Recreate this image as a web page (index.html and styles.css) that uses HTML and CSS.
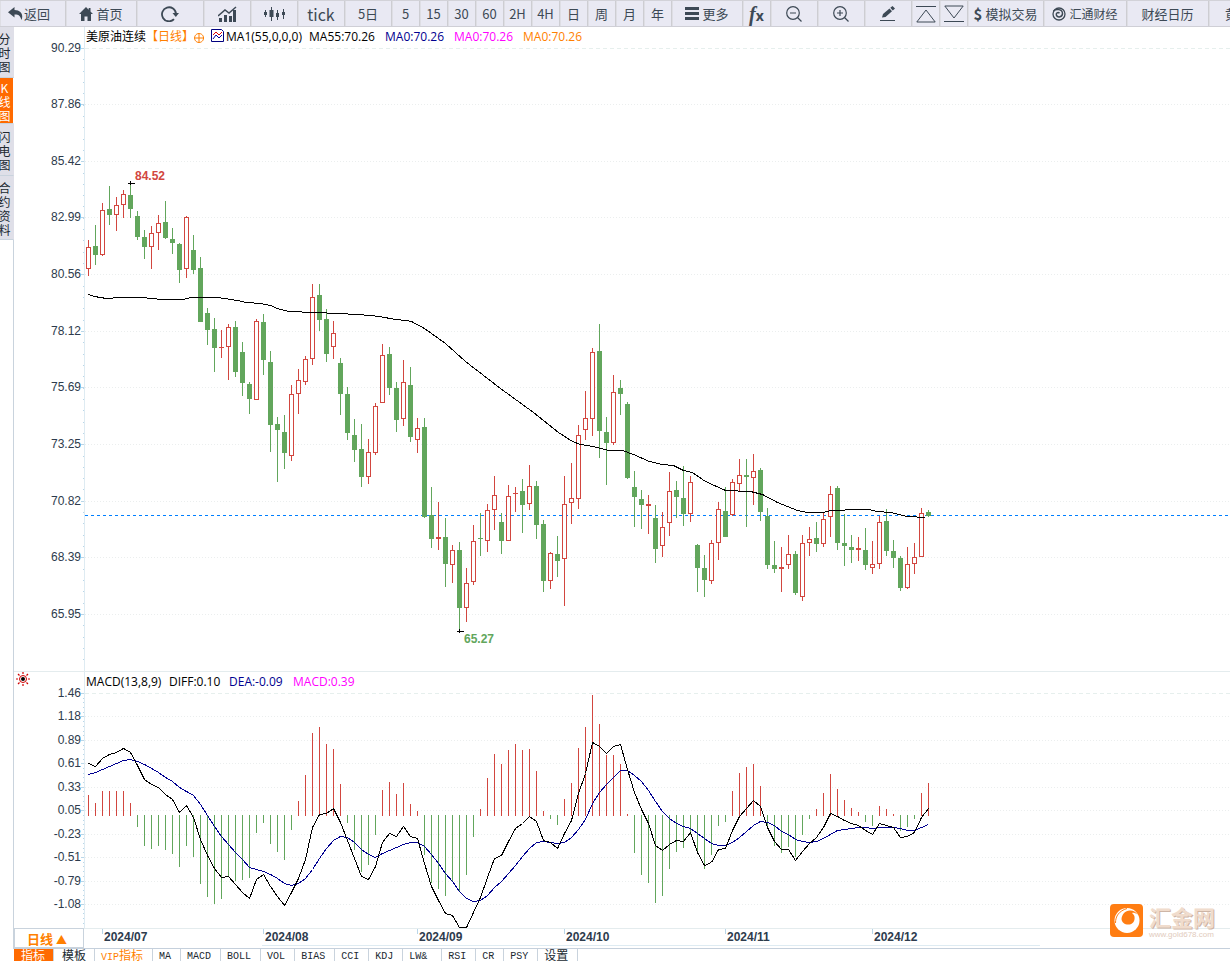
FILE: index.html
```html
<!DOCTYPE html>
<html lang="zh-CN">
<head>
<meta charset="utf-8">
<title>美原油连续 日线</title>
<link rel="stylesheet" href="styles.css">
</head>
<body>
<header class="toolbar">
  <button class="tool back"><svg class="icon" width="15" height="13" viewBox="0 0 15 13"><path fill="currentColor" d="M6.500 0 0 5.200 6.500 10.400V7.500C10 7.300 12 8.200 13.500 13 15.500 8 13.500 3.300 6.500 3z"/></svg>返回</button>
  <button class="tool w71 gap3"><svg class="icon" width="14" height="14" viewBox="0 0 14 14"><path fill="currentColor" d="M7 0 0 7h2v7h3.500V9.500h3V14H12V7h2l-2.500-2.500V1h-1.800v1.700z"/></svg>首页</button>
  <button class="tool w67" aria-label="刷新"><svg class="icon" width="18" height="16" viewBox="0 0 18 16"><path fill="none" stroke="currentColor" stroke-width="1.800" d="M13 13.200A7 7 0 1 1 15 8"/><path fill="currentColor" d="M11.500 7H18l-3.200 4z"/></svg></button>
  <button class="tool w47" aria-label="指标图"><svg class="icon" width="19" height="16" viewBox="0 0 19 16"><path fill="currentColor" d="M1 12h3v4H1zm5-3h3v7H6zm5 1h3v6h-3zm4-6h3v12h-3z"/><path fill="none" stroke="currentColor" stroke-width="1.500" d="M0 10l7-6 4 3 7-6"/></svg></button>
  <button class="tool w47" aria-label="K线图"><svg class="icon" width="21" height="14" viewBox="0 0 21 14"><path stroke="currentColor" d="M1.500 3v7M7.500 0v14M13.500 3v10M19.500 2v10"/><path fill="currentColor" d="M0 5h3v3H0zm5.500-2h4v7h-4zM12 6h3v4h-3zm6-1h3v3h-3z"/></svg></button>
  <button class="tool w47 large">tick</button>
  <button class="tool w47">5日</button>
  <button class="tool w28">5</button>
  <button class="tool w28">15</button>
  <button class="tool w28">30</button>
  <button class="tool w28">60</button>
  <button class="tool w28">2H</button>
  <button class="tool w28">4H</button>
  <button class="tool w28">日</button>
  <button class="tool w28">周</button>
  <button class="tool w28">月</button>
  <button class="tool w28">年</button>
  <button class="tool w71 gap3"><svg class="icon" width="14" height="13" viewBox="0 0 14 13"><path fill="currentColor" d="M0 0h14v3H0zm0 5h14v3H0zm0 5h14v3H0z"/></svg>更多</button>
  <button class="tool w28 fx"><i>f</i><b>x</b></button>
  <button class="tool w47" aria-label="缩小"><svg class="icon" width="16" height="16" viewBox="0 0 16 16"><g fill="none" stroke="currentColor" stroke-width="1.200"><circle cx="7" cy="7" r="6.300"/><path d="M4 7h6M11.500 11.500l4 4"/></g></svg></button>
  <button class="tool w47" aria-label="放大"><svg class="icon" width="16" height="16" viewBox="0 0 16 16"><g fill="none" stroke="currentColor" stroke-width="1.200"><circle cx="7" cy="7" r="6.300"/><path d="M4 7h6M7 4v6M11.500 11.500l4 4"/></g></svg></button>
  <button class="tool w47" aria-label="画线"><svg class="icon" width="16" height="15" viewBox="0 0 16 15"><path fill="currentColor" d="M0 14h15v1H0zM2 11.500 3 8 9.500 2.500l2.500 2.800L5.500 11zM10.300 1.800 12.500 0 15 2.500l-2.200 2z"/></svg></button>
  <button class="tool w28" aria-label="上移"><svg class="icon" width="20" height="18" viewBox="0 0 20 18"><path fill="none" stroke="currentColor" d="M0 1.500h20M10 5 .8 17h18.400z"/></svg></button>
  <button class="tool w28" aria-label="下移"><svg class="icon" width="20" height="18" viewBox="0 0 20 18"><path fill="none" stroke="currentColor" d="M0 16.500h20M10 13 .8 1h18.400z"/></svg></button>
  <button class="tool w76 gap3"><b class="dollar">$</b>模拟交易</button>
  <button class="tool w83 gap3 small"><svg class="icon" width="14" height="14" viewBox="0 0 14 14"><g fill="none" stroke="currentColor"><circle cx="7" cy="7" r="6" stroke-width="1.300"/><path stroke-width="1.500" d="M1.500 4C4 1.500 10.500 2 10.500 6.500c0 3.500-4.500 4.500-6 2C3.500 6 6 4.500 7.500 6.200"/></g></svg>汇通财经</button>
  <button class="tool w82">财经日历</button>
  <button class="tool w82 last">黄金</button>
</header>

<main class="workspace">
  <nav class="side">
    <button class="side-tab h51">分时图</button>
    <button class="side-tab h46 on">K线图</button>
    <button class="side-tab h52">闪电图</button>
    <button class="side-tab h64">合约资料</button>
    <div class="side-rest"></div>
  </nav>
  <div class="charts">
    <section class="panel">
      <div class="legend">
        <span>美原油连续</span><span class="orange">【日线】</span>
        <svg class="plus" width="10" height="10" viewBox="0 0 10 10"><path fill="none" stroke="#ff7f00" d="M5 .5a4.500 4.500 0 1 0 .1 0M5 .5v9M.5 5h9"/></svg>
        <svg class="trend" width="13" height="13" viewBox="0 0 13 13"><path fill="#fff" stroke="#000080" d="M.5.5h10l2 2v10H.5z"/><path fill="none" stroke="#e00000" d="M2 6l3-3 3 3 3-3"/><path fill="none" stroke="#0000a0" d="M2 10l3-4 3 3 3-3"/></svg>
        <span class="item ma1">MA1(55,0,0,0)</span><span class="item ma55">MA55:70.26</span><span class="item ma navy">MA0:70.26</span><span class="item ma magenta">MA0:70.26</span><span class="item orange">MA0:70.26</span>
      </div>
      <svg class="plot price" id="price"></svg>
    </section>
    <section class="panel lower">
      <svg class="sun" width="14" height="14" viewBox="0 0 14 14"><circle cx="7" cy="7" r="3.500" fill="#fff" stroke="#d00000"/><circle cx="7" cy="7" r="2" fill="#000"/><path stroke="#d00000" stroke-width="1.200" d="M7 0v2M7 12v2M0 7h2M12 7h2M2 2l1.500 1.500M10.500 10.500 12 12M12 2l-1.500 1.500M3.500 10.500 2 12"/></svg>
      <div class="legend">
        <span class="item ma1">MACD(13,8,9)</span><span class="item diff">DIFF:0.10</span><span class="item dea navy">DEA:-0.09</span><span class="item magenta">MACD:0.39</span>
      </div>
      <svg class="plot macd" id="macd"></svg>
    </section>
    <div class="timeline">
      <button class="period">日线 <span class="up">▲</span></button>
      <svg class="dates" id="dates"></svg>
    </div>
    <div class="brand">
      <svg width="33" height="33" viewBox="0 0 33 33"><rect width="33" height="33" rx="4" fill="#ff7d12"/><circle cx="17" cy="16.500" r="12.500" fill="#fff"/><path fill="#ff7d12" d="M11.500 15C12 10 15 7 20 6.500c3-.2 5.500 1 7.500 4-2-1.500-4-2-5.500-1.500 2 1.500 2.800 3 2.600 5.500-.3 4-3 6-6.300 6-3.800 0-6.500-2-6.800-5.500z"/><path fill="none" stroke="#ff7d12" d="M5.500 19C5.500 12 9 7 17 4.500"/></svg>
      <div class="brand-text"><strong>汇金网</strong><small>www.gold678.com</small></div>
    </div>
  </div>
</main>

<nav class="tabs">
  <button class="tab on"><span class="cjk">指标</span></button>
  <button class="tab wide"><span class="cjk">模板</span></button>
  <button class="tab vip">VIP<span class="cjk">指标</span></button>
  <button class="tab">MA</button>
  <button class="tab">MACD</button>
  <button class="tab">BOLL</button>
  <button class="tab">VOL</button>
  <button class="tab">BIAS</button>
  <button class="tab">CCI</button>
  <button class="tab">KDJ</button>
  <button class="tab lwr">LW&amp;</button>
  <button class="tab">RSI</button>
  <button class="tab">CR</button>
  <button class="tab">PSY</button>
  <button class="tab"><span class="cjk">设置</span></button>
</nav>
<script src="chart.js"></script>
</body>
</html>
```

FILE: styles.css
```css
* { box-sizing: border-box; }
body {
  margin: 0;
  height: 100vh;
  overflow: hidden;
  display: flex;
  flex-direction: column;
  background: #fff;
  color: #000;
  font: 12px/20px "Open Sans", "Noto Sans CJK SC", sans-serif;
}
button { margin: 0; border: 0; padding: 0; background: none; color: inherit; font: inherit; white-space: nowrap; flex: none; }
svg { display: block; flex: none; }

/* top toolbar */
.toolbar { display: flex; flex: none; height: 27px; overflow: hidden; background: #e9e9f3; border-top: 1px solid #d2d2d8; border-bottom: 1px solid #cfcfd6; }
.tool {
  display: flex; align-items: center; justify-content: center;
  border-right: 1px solid #cdcdd2; box-shadow: inset 1px 0 #dedee4;
  color: #3d4955; font: 13px/24px "Noto Sans CJK SC", sans-serif;
}
.back { width: 66px; justify-content: flex-start; padding-left: 8px; gap: 1px; }
.w28 { width: 28px; } .w47 { width: 47px; } .w67 { width: 67px; } .w71 { width: 71px; }
.w76 { width: 76px; } .w82 { width: 82px; } .w83 { width: 83px; }
.gap3 { gap: 3px; }
.large { font-size: 16px; }
.small { font-size: 12px; }
.dollar { font-size: 15px; }
.last { justify-content: flex-start; padding-left: 16px; }
.fx i { font: italic bold 20px/20px "Liberation Serif", serif; }
.fx b { font: bold 14px/20px "Open Sans", sans-serif; padding-top: 5px; }

/* left tabs */
.workspace { display: flex; flex: none; }
.side { display: flex; flex-direction: column; width: 14px; flex: none; overflow: hidden; }
.side-tab {
  width: 14px; padding: 4px 5px 0 0; display: flex; align-items: center; justify-content: center;
  writing-mode: vertical-rl; text-orientation: upright; overflow: hidden;
  background: #dfdfe8; color: #202830; border-bottom: 1px solid #c9d3dd; border-right: 1px solid #dfdfe8;
  font: 12px/12px "Noto Sans CJK SC", sans-serif; letter-spacing: 2px;
}
.side-tab.on { background: #ff6a00; color: #fff; border-right-color: #fff; }
.h51 { height: 51px; } .h46 { height: 46px; } .h52 { height: 52px; } .h64 { height: 64px; }
.side-rest { flex: 1; border-right: 1px solid #c9d3dd; }

/* chart panels */
.charts { flex: 1; min-width: 0; position: relative; }
.panel { position: relative; }
.lower { border-top: 1px solid #e4ecee; }
.legend { display: flex; align-items: center; height: 20px; margin-left: 70px; border-left: 1px solid #deebf2; padding-left: 1px; white-space: nowrap; }
.item { flex: none; }
.plus { margin-top: 2px; }
.trend { margin: 0 2px 4px 7px; }
.ma1 { width: 83px; } .ma55 { width: 76px; } .ma { width: 69px; }
.diff { width: 60px; } .dea { width: 64px; }
.orange { color: #ff7f00; } .navy { color: #000090; } .magenta { color: #f0f; }
.sun { position: absolute; left: 2px; top: 0; }
.plot { width: 100%; overflow: visible; }
.price { height: 624px; }
.macd { height: 236px; }
.plot line, .plot rect, .plot path, .dates line { shape-rendering: crispEdges; }
.scale { font: 12px "Liberation Sans", Arial, sans-serif; fill: #2d3b4d; text-anchor: end; }
.mark { font: bold 12px "Liberation Sans", Arial, sans-serif; }
.month { font: bold 12px "Liberation Sans", Arial, sans-serif; fill: #2d3b4d; }
.grid { stroke: #ebeeee; stroke-dasharray: 1 2; }
.grid.top { stroke: #e6efed; stroke-dasharray: 4 3; }
.axis { stroke: #deebf2; }
.tick { stroke: #b9d6e8; }
.last-price { stroke: #007fff; stroke-dasharray: 3 3; }
.line { fill: none; stroke: #000; }
.line.dea-line { stroke: #000090; }

.timeline { display: flex; height: 21px; border-bottom: 1px solid #c5d0dc; }
.period { width: 70px; height: 20px; padding-right: 4px; border: 1px solid #c9d3dd; color: #ff7f00; font: bold 13px/20px "Noto Sans CJK SC", sans-serif; }
.up { font-size: 11px; }
.dates { flex: 1; height: 20px; min-width: 0; border-top: 1px solid #e4ecee; }

.brand { position: absolute; right: 15px; bottom: 10px; display: flex; gap: 6px; }
.brand-text { display: flex; flex-direction: column; color: #f0dccd; }
.brand-text strong { font: bold 22px/24px "Noto Sans CJK SC", sans-serif; text-shadow: 1px 1px #cdb5a6; }
.brand-text small { color: #e2cbbc; font: 8px/9px "Liberation Sans", Arial, sans-serif; padding-top: 2px; }

/* indicator tabs */
.tabs { display: flex; flex: none; height: 16px; padding-left: 14px; overflow: hidden; }
.tab { padding: 0 9px 0 6px; border-right: 1px solid #c9d3dd; color: #202830; font: 10px/16px "Liberation Mono", "Noto Sans CJK SC", monospace; }
.tab.on { background: #ff6a00; color: #fff; padding: 0 8px 0 7px; }
.tab.wide { padding: 0 8px; }
.tab.vip { color: #ff7f00; }
.tab.lwr { padding-right: 14px; }
.cjk { font-size: 12px; }
```

FILE: chart.js
```js
// Every candle: kind (1 up, 0 down), high, body top, body bottom, low.
const candles = [
[1,240,247,269,276],[0,225,246,255,265],[1,203,210,255,256],[0,186,209,215,225],[1,197,205,215,231],[1,190,194,205,218],[0,183,195,209,218],[0,211,216,237,240],
[0,230,237,247,259],[1,226,233,247,269],[1,215,223,233,250],[0,201,222,238,239],[0,228,239,243,254],[0,243,244,270,283],[1,216,217,269,278],[0,235,250,270,274],
[0,257,268,322,322],[0,308,313,330,345],[0,318,329,348,372],[1,330,347,348,358],[1,324,327,347,380],[0,321,327,372,377],[0,342,352,383,396],[0,382,384,399,414],
[1,319,321,400,400],[0,314,322,360,375],[0,351,362,425,452],[0,417,424,430,482],[0,415,432,453,469],[1,385,394,456,461],[1,369,380,394,414],[1,356,359,382,385],
[1,284,297,359,365],[0,284,295,320,331],[0,309,319,354,362],[1,321,333,347,359],[0,358,363,394,415],[0,387,394,433,440],[0,419,435,450,462],[0,424,449,477,487],
[1,439,452,477,484],[1,403,406,453,455],[1,344,355,403,403],[0,347,354,388,395],[0,382,388,420,432],[1,360,382,419,426],[0,367,385,437,442],[1,418,428,440,453],
[0,418,427,517,518],[0,487,515,539,548],[1,502,537,539,550],[0,518,537,564,587],[1,545,550,565,583],[0,542,550,608,631],[1,568,583,608,622],[1,525,541,582,585],
[0,513,538,539,556],[1,504,510,541,552],[1,476,495,510,530],[0,513,522,541,554],[1,485,496,541,541],[1,487,493,494,512],[0,479,491,505,533],[1,465,486,504,510],
[0,481,486,525,539],[0,520,524,581,592],[1,552,553,581,589],[0,536,554,561,577],[1,476,504,559,606],[1,463,498,503,524],[1,425,435,499,509],[1,391,418,430,440],
[1,348,352,419,436],[0,324,351,431,458],[0,417,432,443,485],[1,375,392,443,445],[0,380,388,394,415],[0,402,404,478,479],[0,471,487,497,527],[0,490,499,505,529],
[1,495,504,506,534],[0,505,518,549,563],[1,512,527,546,557],[1,472,491,523,536],[0,481,490,497,518],[0,466,498,514,526],[1,476,482,514,522],[0,544,545,568,592],
[0,555,568,580,597],[1,540,543,581,584],[1,502,509,543,560],[0,487,511,537,537],[1,479,482,515,516],[1,459,475,484,492],[0,459,475,477,527],[1,454,471,478,505],
[0,468,470,512,521],[0,508,516,565,569],[0,541,565,569,573],[1,547,567,569,592],[1,535,554,565,569],[0,551,554,593,595],[1,535,543,597,601],[1,527,539,543,556],
[0,522,538,544,552],[1,513,519,544,547],[1,486,494,517,537],[0,486,488,543,550],[0,514,543,546,566],[0,535,547,550,563],[1,537,548,550,561],[0,528,550,565,570],
[1,541,564,568,574],[1,516,522,564,569],[0,509,521,551,556],[0,540,551,558,568],[0,556,558,588,591],[1,547,564,588,589],[1,543,557,564,574],[1,508,513,557,557],[0,510,512,516,517]
];
const average = [[88,294],[94,296],[106,298],[120,297],[141,297],[162,299],[183,299],[190,297],[217,297],[237,300],[246,302],[260,303],[270,305],[277,308],[288,311],[315,312],[337,313],[358,314],[369,315],[379,316],[395,319],[405,320],[411,321],[424,328],[445,343],[465,361],[500,388],[533,412],[558,432],[572,441],[580,444],[593,446],[608,450],[622,450],[633,454],[649,461],[662,464],[673,465],[683,470],[692,472],[705,481],[725,490],[750,491],[762,494],[777,502],[797,510],[807,512],[823,512],[830,510],[840,510],[850,509],[868,509],[877,511],[890,512],[907,516],[925,517]];
const bars = [795,803,791,791,791,791,803,827,846,849,846,850,854,867,846,857,884,897,904,899,877,881,880,878,833,823,844,852,860,830,801,775,733,727,744,749,784,823,850,872,865,835,790,782,794,783,804,811,855,883,889,896,882,891,875,837,809,778,754,764,750,744,750,749,771,811,819,825,799,783,748,727,695,724,755,755,764,814,853,875,883,903,896,869,852,848,835,854,869,855,826,822,791,773,767,764,786,827,846,853,847,857,835,819,809,793,774,789,800,808,812,822,826,806,809,814,831,827,819,793,783];
const diff = [763,766,758,754,752,748,752,765,779,784,787,794,799,812,805,817,839,855,868,877,876,884,892,898,879,874,886,896,905,892,878,859,827,814,813,808,822,840,858,876,879,866,842,833,836,826,836,838,863,886,900,913,915,927,927,912,897,877,858,855,841,828,823,816,821,840,842,848,833,820,793,773,742,746,753,746,744,769,792,809,823,845,850,844,840,841,832,852,865,862,849,848,830,816,808,800,806,827,841,849,849,860,851,843,837,827,813,816,820,823,825,830,834,823,825,827,837,836,832,817,808];
const dea = [774,772,769,766,763,760,759,761,764,768,772,777,781,787,791,795,804,815,826,836,844,852,859,867,869,871,874,878,883,885,883,878,869,858,848,840,836,837,842,849,854,857,853,850,847,844,842,842,846,854,863,873,881,891,898,901,900,895,887,881,873,865,856,848,842,841,842,843,842,837,829,819,803,792,784,777,770,770,775,781,790,801,811,818,823,826,828,833,838,843,845,845,842,837,831,825,821,822,825,831,834,839,841,842,841,838,834,830,829,828,827,827,828,827,827,827,828,830,830,827,824];

const RED = '#d2463f', GREEN = '#62a65c';
const xAt = i => 88 + 7 * i;
const line = (x1, y1, x2, y2, cls) => `<line class="${cls}" x1="${x1}" y1="${y1}" x2="${x2}" y2="${y2}"/>`;
const box = (x, y, w, h, fill) => `<rect x="${x}" y="${y}" width="${w}" height="${h}" fill="${fill}"/>`;
const poly = (pts, cls) => `<path class="line ${cls}" d="M${pts.map(p => (p[0] + 0.5) + ' ' + (p[1] + 0.5)).join('L')}"/>`;

function scale(rows, labels, top, bottom) {
  let out = line(84.5, top, 84.5, bottom, 'axis');
  const step = (rows[rows.length - 1] - rows[0]) / (rows.length - 1) / 5;
  for (let y = rows[0]; y < bottom - 2; y += step) out += box(83, Math.round(y), 1, 1, '#b9d6e8');
  rows.forEach((y, i) => {
    out += line(85, y + 0.5, '102%', y + 0.5, i ? 'grid' : 'grid top');
    out += line(81, y + 0.5, 84, y + 0.5, 'tick');
    out += `<text class="scale" x="81" y="${y + 4}">${labels[i]}</text>`;
  });
  return out;
}
const shift = (dy, body) => `<g transform="translate(-14 ${-dy})">${body}</g>`;

let p = scale([48,104,161,217,274,331,387,444,501,557,614], ['90.29','87.86','85.42','82.99','80.56','78.12','75.69','73.25','70.82','68.39','65.95'], 47, 671);
p += line(85, 515.5, '102%', 515.5, 'last-price');
candles.forEach(([up, hi, top, bot, lo], i) => {
  const x = xAt(i), c = up ? RED : GREEN;
  p += box(x, hi, 1, lo - hi, c);
  if (up && bot - top > 2) {
    p += box(x - 2, top, 5, bot - top, c) + box(x - 1, top + 1, 3, bot - top - 2, '#fff');
  } else {
    p += box(x - 2, top, 5, bot - top, c);
  }
});
p += poly(average, '');
p += box(128, 183, 7, 1, '#000') + box(130, 181, 1, 4, '#000') + `<text class="mark" x="135" y="180" fill="${RED}">84.52</text>`;
p += box(457, 631, 7, 1, '#000') + box(459, 629, 1, 4, '#000') + `<text class="mark" x="464" y="643" fill="${GREEN}">65.27</text>`;
document.getElementById('price').innerHTML = shift(47, p);

let m = scale([693,716,740,763,787,810,834,857,881,904], ['1.46','1.18','0.89','0.61','0.33','0.05','-0.23','-0.51','-0.79','-1.08'], 692, 928);
bars.forEach((y, i) => {
  m += y < 816 ? box(xAt(i), y, 1, 816 - y, RED) : box(xAt(i), 815, 1, y - 815, GREEN);
});
m += poly(dea.map((y, i) => [xAt(i), y]), 'dea-line') + poly(diff.map((y, i) => [xAt(i), y]), '');
document.getElementById('macd').innerHTML = shift(692, m);

let d = line(178, 16.5, 956, 16.5, 'axis');
[[2,'2024/07'],[25,'2024/08'],[47,'2024/09'],[68,'2024/10'],[91,'2024/11'],[112,'2024/12']].forEach(([i, name]) => {
  const x = xAt(i) - 84;
  d += line(x + 0.5, 0, x + 0.5, 5, 'tick') + `<text class="month" x="${x + 2}" y="12">${name}</text>`;
});
document.getElementById('dates').innerHTML = d;
```
